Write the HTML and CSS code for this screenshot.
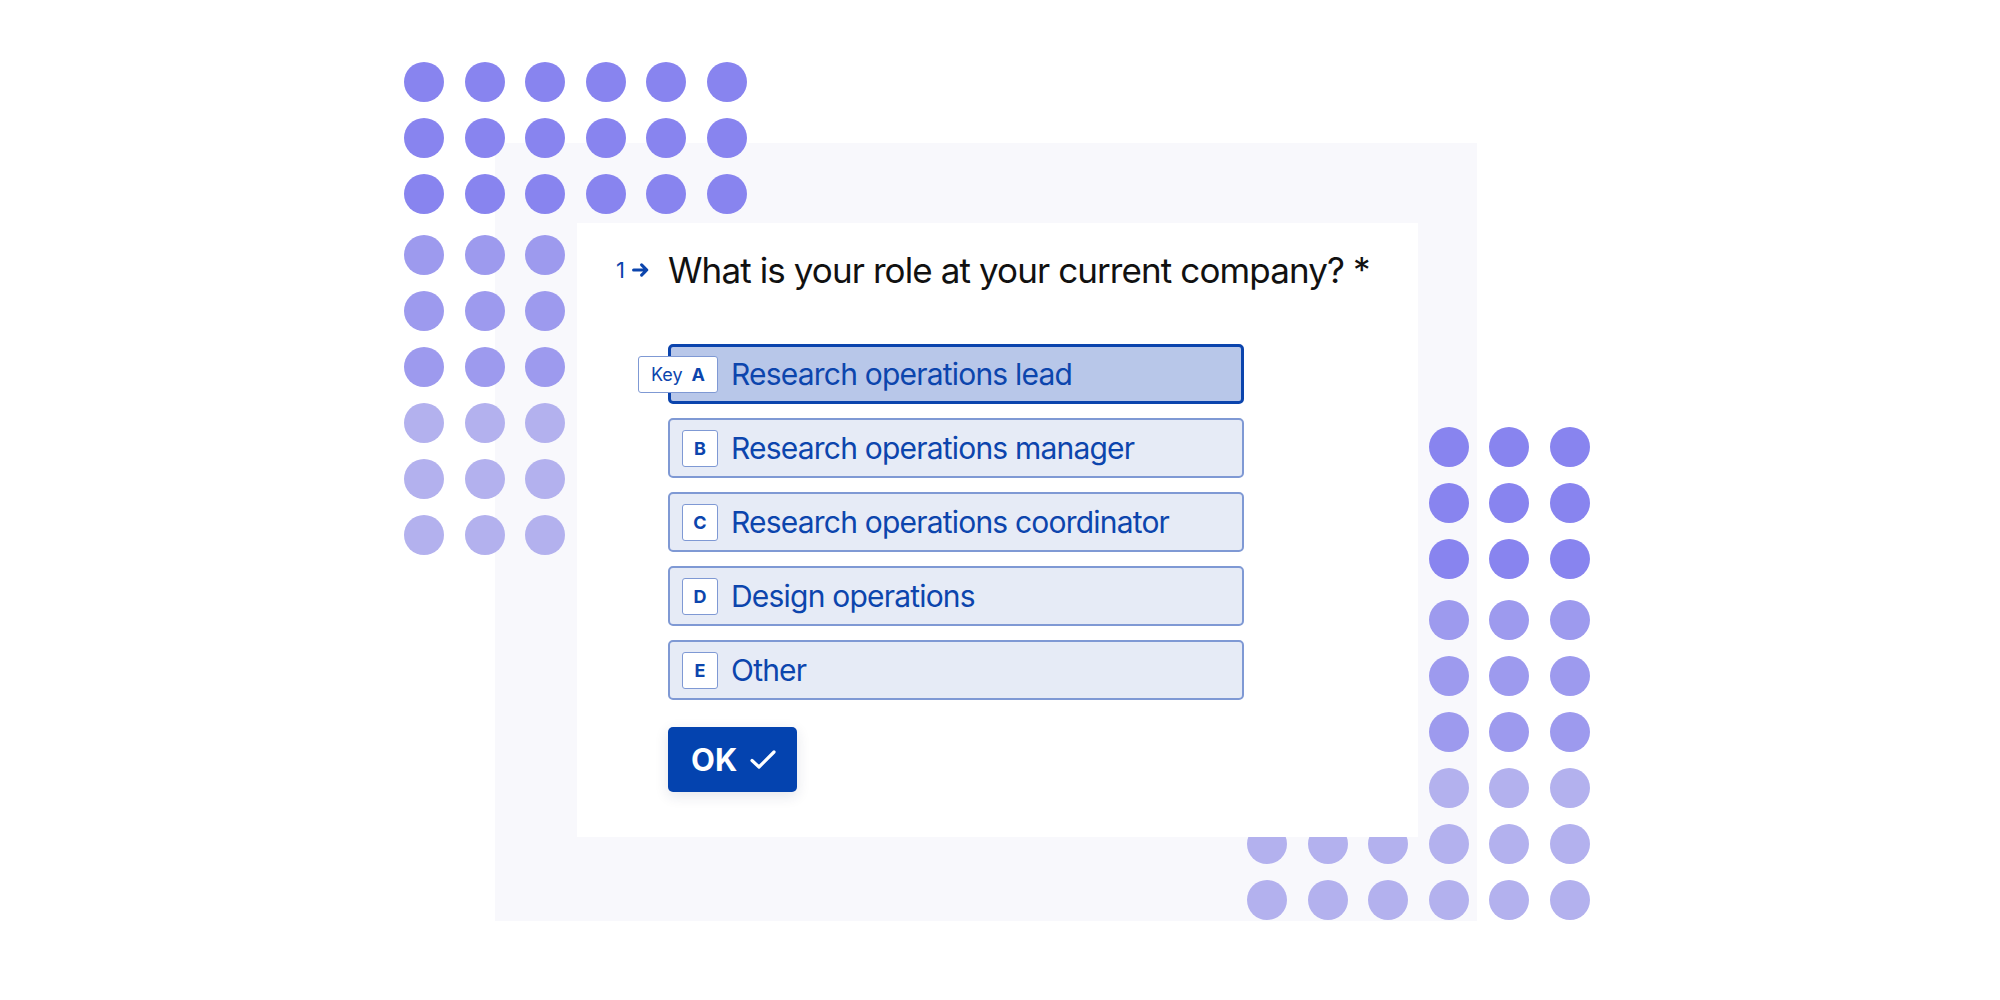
FILE: index.html
```html
<!DOCTYPE html>
<html lang="en">
<head>
<meta charset="utf-8">
<title>Typeform question</title>
<link rel="stylesheet" href="styles.css">
</head>
<body>
<div class="stage">
  <div class="dots dots-tl">
    <span class="dot d1"></span><span class="dot d1"></span><span class="dot d1"></span><span class="dot d1"></span><span class="dot d1"></span><span class="dot d1"></span>
    <span class="dot d1"></span><span class="dot d1"></span><span class="dot d1"></span><span class="dot d1"></span><span class="dot d1"></span><span class="dot d1"></span>
    <span class="dot d1"></span><span class="dot d1"></span><span class="dot d1"></span><span class="dot d1"></span><span class="dot d1"></span><span class="dot d1"></span>
    <span class="dot d2"></span><span class="dot d2"></span><span class="dot d2"></span><span class="dot d2"></span><span class="dot d2"></span><span class="dot d2"></span>
    <span class="dot d2"></span><span class="dot d2"></span><span class="dot d2"></span><span class="dot d2"></span><span class="dot d2"></span><span class="dot d2"></span>
    <span class="dot d2"></span><span class="dot d2"></span><span class="dot d2"></span><span class="dot d2"></span><span class="dot d2"></span><span class="dot d2"></span>
    <span class="dot d3"></span><span class="dot d3"></span><span class="dot d3"></span><span class="dot d3"></span><span class="dot d3"></span><span class="dot d3"></span>
    <span class="dot d3"></span><span class="dot d3"></span><span class="dot d3"></span><span class="dot d3"></span><span class="dot d3"></span><span class="dot d3"></span>
    <span class="dot d3"></span><span class="dot d3"></span><span class="dot d3"></span><span class="dot d3"></span><span class="dot d3"></span><span class="dot d3"></span>
  </div>
  <div class="dots dots-br">
    <span class="dot d1"></span><span class="dot d1"></span><span class="dot d1"></span><span class="dot d1"></span><span class="dot d1"></span><span class="dot d1"></span>
    <span class="dot d1"></span><span class="dot d1"></span><span class="dot d1"></span><span class="dot d1"></span><span class="dot d1"></span><span class="dot d1"></span>
    <span class="dot d1"></span><span class="dot d1"></span><span class="dot d1"></span><span class="dot d1"></span><span class="dot d1"></span><span class="dot d1"></span>
    <span class="dot d2"></span><span class="dot d2"></span><span class="dot d2"></span><span class="dot d2"></span><span class="dot d2"></span><span class="dot d2"></span>
    <span class="dot d2"></span><span class="dot d2"></span><span class="dot d2"></span><span class="dot d2"></span><span class="dot d2"></span><span class="dot d2"></span>
    <span class="dot d2"></span><span class="dot d2"></span><span class="dot d2"></span><span class="dot d2"></span><span class="dot d2"></span><span class="dot d2"></span>
    <span class="dot d3"></span><span class="dot d3"></span><span class="dot d3"></span><span class="dot d3"></span><span class="dot d3"></span><span class="dot d3"></span>
    <span class="dot d3"></span><span class="dot d3"></span><span class="dot d3"></span><span class="dot d3"></span><span class="dot d3"></span><span class="dot d3"></span>
    <span class="dot d3"></span><span class="dot d3"></span><span class="dot d3"></span><span class="dot d3"></span><span class="dot d3"></span><span class="dot d3"></span>
  </div>

  <div class="panel">
    <div class="card">
      <div class="question">
        <span class="qnum">1<svg class="qarrow" width="17" height="16" viewBox="0 0 17 16"><path d="M1.6 8H14.6M9.6 2.8L14.8 8L9.6 13.2" fill="none" stroke="#0c45ad" stroke-width="3.1" stroke-linecap="round" stroke-linejoin="round"/></svg></span>
        <span class="qtext">What is your role at your current company? *</span>
      </div>

      <div class="options">
        <div class="option selected">
          <span class="key key-wide">Key <b>A</b></span>
          <span class="label">Research operations lead</span>
        </div>
        <div class="option">
          <span class="key"><b>B</b></span>
          <span class="label">Research operations manager</span>
        </div>
        <div class="option">
          <span class="key"><b>C</b></span>
          <span class="label">Research operations coordinator</span>
        </div>
        <div class="option">
          <span class="key"><b>D</b></span>
          <span class="label">Design operations</span>
        </div>
        <div class="option">
          <span class="key"><b>E</b></span>
          <span class="label">Other</span>
        </div>
      </div>

      <button class="ok">OK<svg class="check" width="28" height="22" viewBox="0 0 28 22"><path d="M3 11.5L10 18L25 3" fill="none" stroke="#fff" stroke-width="3.2" stroke-linecap="round" stroke-linejoin="round"/></svg></button>
    </div>
  </div>
</div>
</body>
</html>
```

FILE: styles.css
```css
* { box-sizing: border-box; }

html, body {
  margin: 0;
  padding: 0;
  background: #ffffff;
}

body {
  font-family: "Inter", "Liberation Sans", Arial, sans-serif;
}

.stage {
  position: relative;
  width: 2000px;
  height: 1000px;
  overflow: hidden;
  background: #ffffff;
  padding: 143px 0 0 495px;
}

/* decorative dot grids */
.dots {
  position: absolute;
  z-index: 1;
  display: grid;
  grid-template-columns: repeat(6, 40px);
  grid-template-rows: 40px 40px 45px repeat(6, 40px);
  column-gap: 20.6px;
  row-gap: 16px;
  align-items: start;
}

.dots-tl { left: 404px; top: 62px; }
.dots-br { left: 1247px; top: 427px; }

.dot {
  width: 40px;
  height: 40px;
  border-radius: 50%;
}

.d1 { background: #8884ef; }
.d2 { background: #9d9aee; }
.d3 { background: #b3b1ee; }

/* lavender panel */
.panel {
  width: 982px;
  height: 778px;
  background: #f8f8fc;
  padding: 80px 0 0 82px;
}

.card {
  position: relative;
  z-index: 2;
  width: 841px;
  height: 614px;
  background: #ffffff;
  padding: 26px 0 0 91px;
}

.question {
  display: flex;
  align-items: baseline;
  height: 42px;
  margin-left: -52px;
}

.qnum {
  display: inline-flex;
  align-items: center;
  width: 52px;
  font-size: 22px;
  color: #0c45ad;
  line-height: 1;
  position: relative;
  top: -5px;
}

.qarrow {
  margin-left: 7px;
}

.qtext {
  font-size: 35px;
  line-height: 42px;
  color: #111111;
  letter-spacing: -0.9px;
}

.options {
  margin-top: 53px;
  display: flex;
  flex-direction: column;
  gap: 14px;
  width: 576px;
}

.option {
  display: flex;
  align-items: center;
  height: 60px;
  padding-left: 12px;
  background: #e6ebf6;
  border: 2px solid #7f99d4;
  border-radius: 5px;
  color: #0c45ad;
}

.option.selected {
  background: #b8c7e9;
  border: 3px solid #0b44ad;
  padding-left: 11px;
}

.key {
  display: inline-flex;
  align-items: center;
  justify-content: center;
  width: 36px;
  height: 37px;
  background: #ffffff;
  border: 1.5px solid #7f99d4;
  border-radius: 3px;
  font-size: 18px;
  color: #0c45ad;
  flex-shrink: 0;
}

.key b { font-weight: 700; }

.key-wide {
  width: 80px;
  margin-left: -44px;
  gap: 9px;
  font-size: 18px;
}

.label {
  margin-left: 13px;
  font-size: 30px;
  letter-spacing: -0.8px;
  line-height: 1;
}

.ok {
  margin-top: 27px;
  display: flex;
  align-items: center;
  gap: 12px;
  width: 129px;
  height: 65px;
  padding: 0 0 0 23px;
  border: none;
  border-radius: 5px;
  background: #0443af;
  color: #ffffff;
  font-family: "Inter", "Liberation Sans", Arial, sans-serif;
  font-size: 31px;
  font-weight: 700;
  box-shadow: 0 4px 14px rgba(30, 40, 80, 0.12);
}

.check { display: block; }
```
